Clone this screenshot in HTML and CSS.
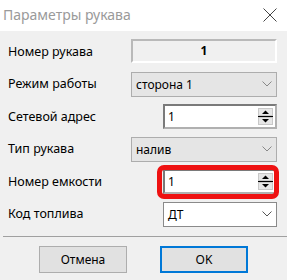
FILE: index.html
```html
<!DOCTYPE html>
<html>
<head>
<meta charset="utf-8">
<link rel="stylesheet" href="styles.css">
</head>
<body>
<div class="dialog">
  <div class="titlebar">
    <span class="title">Параметры рукава</span>
    <svg class="close" width="14" height="14" viewBox="0 0 14 14"><path d="M0.5 0.5L13.5 13.5M13.5 0.5L0.5 13.5" stroke="#444" stroke-width="1" fill="none"/></svg>
  </div>
  <div class="content">
    <div class="form">
      <div class="row">
        <span class="label">Номер рукава</span>
        <div class="readonly wide">1</div>
      </div>
      <div class="row">
        <span class="label">Режим работы</span>
        <div class="combo wide"><span>сторона 1</span><svg class="chev" width="10" height="6" viewBox="0 0 10 6"><path d="M0.5 0.5L5 5L9.5 0.5" stroke="#888" fill="none"/></svg></div>
      </div>
      <div class="row">
        <span class="label">Сетевой адрес</span>
        <div class="spin narrow"><span>1</span>
          <svg class="spinbtn" width="15" height="17" viewBox="0 0 15 17"><rect x="0.5" y="0.5" width="14" height="7" fill="#e6e6e6" stroke="#c8c8c8"/><rect x="0.5" y="9.5" width="14" height="7" fill="#e6e6e6" stroke="#c8c8c8"/><path d="M4 6H11L7.5 2.5Z" fill="#000"/><path d="M4 11H11L7.5 14.5Z" fill="#000"/><line x1="0" y1="8.5" x2="15" y2="8.5" stroke="#000"/></svg>
        </div>
      </div>
      <div class="row">
        <span class="label">Тип рукава</span>
        <div class="combo wide"><span>налив</span><svg class="chev" width="10" height="6" viewBox="0 0 10 6"><path d="M0.5 0.5L5 5L9.5 0.5" stroke="#888" fill="none"/></svg></div>
      </div>
      <div class="row">
        <span class="label">Номер емкости</span>
        <div class="spin narrow marked"><span>1</span>
          <svg class="spinbtn" width="15" height="17" viewBox="0 0 15 17"><rect x="0.5" y="0.5" width="14" height="7" fill="#e6e6e6" stroke="#c8c8c8"/><rect x="0.5" y="9.5" width="14" height="7" fill="#e6e6e6" stroke="#c8c8c8"/><path d="M4 6H11L7.5 2.5Z" fill="#000"/><path d="M4 11H11L7.5 14.5Z" fill="#000"/><line x1="0" y1="8.5" x2="15" y2="8.5" stroke="#000"/></svg>
        </div>
      </div>
      <div class="row">
        <span class="label">Код топлива</span>
        <div class="combo white narrow"><span>ДТ</span><svg class="chev" width="10" height="6" viewBox="0 0 10 6"><path d="M0.5 0.5L5 5L9.5 0.5" stroke="#555" fill="none"/></svg></div>
      </div>
    </div>
    <div class="sep"></div>
    <div class="buttons">
      <button class="btn">Отмена</button>
      <button class="btn default">OK</button>
    </div>
  </div>
</div>
</body>
</html>
```
FILE: styles.css
```css
html, body {
  margin: 0;
  padding: 0;
}
body {
  width: 287px;
  height: 280px;
  overflow: hidden;
  background: #f0f0f0;
  font-family: "Noto Sans", "Open Sans", sans-serif;
  font-size: 12px;
  color: #000;
}
.dialog {
  display: flex;
  flex-direction: column;
  height: 280px;
}
.titlebar {
  height: 31px;
  background: #fff;
  display: flex;
  align-items: center;
  justify-content: space-between;
  padding: 0 10px 0 3px;
  box-sizing: border-box;
}
.title {
  font-size: 14px;
  color: #9a9a9a;
  margin-top: -2px;
}
.close {
  display: block;
  margin-top: -2px;
}
.content {
  flex: 1;
  display: flex;
  flex-direction: column;
}
.form {
  display: grid;
  grid-auto-rows: 25px;
  row-gap: 7.6px;
  padding: 8px 10px 0 8px;
}
.row {
  display: flex;
  align-items: center;
  justify-content: space-between;
}
.label {
  font-size: 12.5px;
  line-height: 16px;
}
.wide {
  width: 146px;
}
.narrow {
  width: 114px;
}
.readonly {
  height: 24px;
  box-sizing: border-box;
  border: 2px solid;
  border-color: #b9b9b9 #fff #fff #b9b9b9;
  background: #f0f0f0;
  text-align: center;
  font-weight: bold;
  line-height: 20px;
  align-self: flex-start;
}
.combo {
  height: 25px;
  box-sizing: border-box;
  border: 1px solid #adadad;
  background: #e5e5e5;
  display: flex;
  align-items: center;
  justify-content: space-between;
  padding: 0 4px 0 4px;
}
.combo.white {
  background: #fff;
  border-color: #8a8a8a;
}
.chev {
  display: block;
}
.spin {
  position: relative;
  height: 25px;
  box-sizing: border-box;
  border: 2px solid #8c8c8c;
  border-color: #7a7a7a #b0b0b0 #b0b0b0 #7a7a7a;
  background: #fff;
  display: flex;
  align-items: center;
  justify-content: space-between;
  padding: 0 2px 0 3px;
}
.spinbtn {
  display: block;
}
.marked::after {
  content: "";
  position: absolute;
  left: -8px;
  right: -4px;
  top: -6px;
  bottom: -7px;
  border: 5px solid #ee1111;
  border-radius: 7px;
  pointer-events: none;
}
.sep {
  height: 0;
  border-top: 1px solid #a0a0a0;
  margin: 9px 0 0 3px;
}
.buttons {
  display: flex;
  justify-content: center;
  gap: 33px;
  margin-top: 9px;
  padding-right: 0;
}
.btn {
  width: 88px;
  height: 27px;
  box-sizing: border-box;
  border: 1px solid #adadad;
  background: #e1e1e1;
  font-family: "Noto Sans", "Open Sans", sans-serif;
  font-size: 12px;
  color: #000;
  padding: 0;
}
.btn.default {
  border: 2px solid #0078d7;
}
```
